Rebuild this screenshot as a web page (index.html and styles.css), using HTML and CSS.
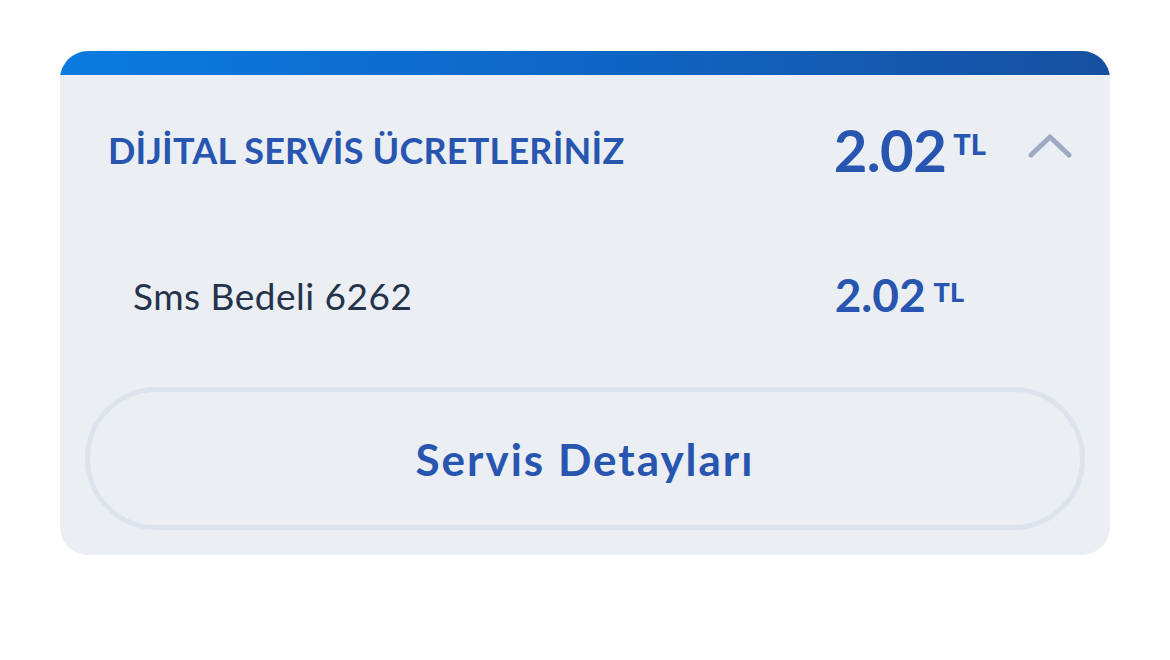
FILE: index.html
```html
<!DOCTYPE html>
<html lang="tr">
<head>
<meta charset="utf-8">
<link rel="stylesheet" href="styles.css">
</head>
<body>
<div class="card">
  <div class="bar"></div>
  <div class="head">
    <div class="title">DİJİTAL SERVİS ÜCRETLERİNİZ</div>
    <div class="amount big"><span class="num">2.02</span><span class="cur">TL</span></div>
    <svg class="chev" width="44" height="26" viewBox="0 0 44 26"><path d="M3 22 L22 4 L41 22" fill="none" stroke="#9eaac3" stroke-width="5" stroke-linecap="round" stroke-linejoin="round"/></svg>
  </div>
  <div class="row">
    <div class="label">Sms Bedeli 6262</div>
    <div class="amount small"><span class="num">2.02</span><span class="cur">TL</span></div>
  </div>
  <div class="btn">Servis Detayları</div>
</div>
</body>
</html>
```
FILE: styles.css
```css
html, body { margin: 0; padding: 0; background: #fff; }
body { font-family: "Lato", "Noto Sans", sans-serif; }
.card {
  margin: 51px 0 0 60px;
  width: 1050px;
  height: 504px;
  border-radius: 28px;
  overflow: hidden;
  background: #ebeef2;
  display: flex;
  flex-direction: column;
}
.bar { height: 24px; background: linear-gradient(90deg, #0a7be0 0%, #0f66c6 50%, #1650a0 100%); }
.head {
  height: 150px;
  display: flex;
  align-items: center;
  padding: 0 38px 0 48px;
}
.title {
  flex: 1;
  color: #2755b0;
  font-weight: 700;
  font-size: 36px;
  letter-spacing: 0.2px;
}
.amount { display: flex; align-items: flex-start; color: #2755b0; font-weight: 700; }
.big .num { font-size: 58px; line-height: 1; letter-spacing: -0.5px; }
.big .cur { font-size: 29px; margin-left: 7px; margin-top: 5px; font-weight: 900; }
.chev { margin-left: 42px; margin-top: -8px; }
.row {
  height: 140px;
  display: flex;
  align-items: center;
  padding: 0 146px 0 73px;
  justify-content: space-between;
}
.label { color: #24334a; font-size: 37px; font-weight: 400; letter-spacing: 0.5px; }
.small .num { font-size: 46px; line-height: 1; }
.small .cur { font-size: 27px; margin-left: 8px; margin-top: 3px; font-weight: 900; }
.btn {
  margin: 22px 25px 25px;
  flex: 1;
  border: 5px solid #dde3ed;
  border-radius: 80px;
  display: flex;
  align-items: center;
  justify-content: center;
  color: #2755b0;
  font-weight: 700;
  font-size: 44px;
  letter-spacing: 2px;
}
```
